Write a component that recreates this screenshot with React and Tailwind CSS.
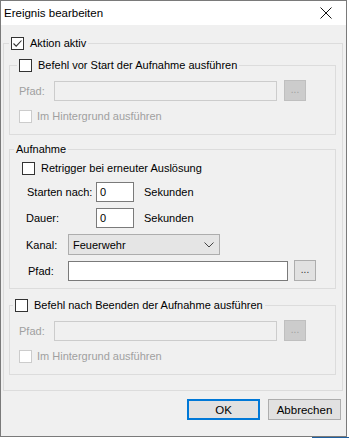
import React from 'react';

const font = { fontFamily: '"Liberation Sans", Arial, sans-serif' };

const Check = ({ checked, disabled }) => (
  <span
    className={`inline-flex items-center justify-center w-[13px] h-[13px] shrink-0 border bg-white ${
      disabled ? 'border-[#cccccc]' : 'border-[#333333]'
    }`}
  >
    {checked && (
      <svg width="11" height="11" viewBox="0 0 11 11">
        <path d="M1.5 5.5 L4.2 8.2 L9.5 2.5" fill="none" stroke="#333333" strokeWidth="1.1" />
      </svg>
    )}
  </span>
);

const DotsButton = ({ disabled }) => (
  <div
    className={`w-[22px] h-[21px] border flex items-center justify-center text-[10px] leading-none pb-[2px] ${
      disabled ? 'bg-[#cccccc] border-[#bfbfbf] text-[#a0a0a0]' : 'bg-[#e1e1e1] border-[#adadad] text-[#333]'
    }`}
  >
    ...
  </div>
);

const DisabledCommand = () => (
  <div className="pl-[9px] pr-[6px]">
    <div className="flex items-center mt-[8px]">
      <span className="w-[35px] text-[#a0a0a0]">Pfad:</span>
      <div className="w-[223px] h-[20px] border border-[#cccccc] bg-[#f0f0f0]" />
      <div className="ml-[7px]">
        <DotsButton disabled />
      </div>
    </div>
    <div className="flex items-center mt-[8px] mb-[11px]">
      <Check disabled />
      <span className="ml-[5px] text-[#a0a0a0]">Im Hintergrund ausführen</span>
    </div>
  </div>
);

export default function App() {
  return (
    <div className="w-[349px] h-[438px] bg-white relative text-[11px] leading-[14px] text-black" style={font}>
      <div className="w-[347px] h-[437px] border border-[#7a7a7a] bg-[#f0f0f0] flex flex-col">
        {/* Titelleiste */}
        <div className="h-[24px] bg-white flex items-center justify-between pl-[3px] pr-[14px] shrink-0">
          <span className="text-[11.5px]">Ereignis bearbeiten</span>
          <svg width="12" height="12" viewBox="0 0 12 12">
            <path d="M0.5 0.5 L11.5 11.5 M11.5 0.5 L0.5 11.5" stroke="#111" strokeWidth="1" />
          </svg>
        </div>

        <div className="pl-[2px] pr-[3px]">
          {/* Aktion aktiv */}
          <fieldset className="mt-[11px] border border-[#dcdcdc] pl-[5px] pr-[6px] pb-[15px] w-[340px]">
            <legend className="flex items-center px-[2px] h-[14px]">
              <Check checked />
              <span className="ml-[6px]">Aktion aktiv</span>
            </legend>

            <fieldset className="mt-[8px] border border-[#dcdcdc] p-0">
              <legend className="flex items-center ml-[7px] px-[2px] h-[14px]">
                <Check />
                <span className="ml-[6px]">Befehl vor Start der Aufnahme ausführen</span>
              </legend>
              <DisabledCommand />
            </fieldset>

            <fieldset className="mt-[7px] border border-[#dcdcdc] p-0">
              <legend className="ml-[4px] px-[2px] h-[14px]">Aufnahme</legend>
              <div className="pl-[12px] pr-[6px] pb-[7px]">
                <div className="flex items-center mt-[5px]">
                  <Check />
                  <span className="ml-[6px]">Retrigger bei erneuter Auslösung</span>
                </div>
                <div className="flex items-center mt-[7px] pl-[5px]">
                  <span className="w-[69px]">Starten nach:</span>
                  <div className="w-[38px] h-[20px] border border-[#7a7a7a] bg-white pl-[3px] flex items-center">0</div>
                  <span className="ml-[10px]">Sekunden</span>
                </div>
                <div className="flex items-center mt-[6px] pl-[4px]">
                  <span className="w-[70px]">Dauer:</span>
                  <div className="w-[38px] h-[20px] border border-[#7a7a7a] bg-white pl-[3px] flex items-center">0</div>
                  <span className="ml-[10px]">Sekunden</span>
                </div>
                <div className="flex items-center mt-[6px] pl-[4px]">
                  <span className="w-[42px]">Kanal:</span>
                  <div className="w-[152px] h-[21px] border border-[#adadad] bg-[#e5e5e5] pl-[4px] pr-[5px] flex items-center justify-between">
                    <span>Feuerwehr</span>
                    <svg width="10" height="6" viewBox="0 0 10 6">
                      <path d="M0.5 0.5 L5 5 L9.5 0.5" fill="none" stroke="#444" strokeWidth="1" />
                    </svg>
                  </div>
                </div>
                <div className="flex items-center mt-[5px] pl-[6px]">
                  <span className="w-[40px]">Pfad:</span>
                  <div className="w-[220px] h-[20px] border border-[#7a7a7a] bg-white" />
                  <div className="ml-[6px]">
                    <DotsButton />
                  </div>
                </div>
              </div>
            </fieldset>

            <fieldset className="mt-[9px] border border-[#dcdcdc] p-0">
              <legend className="flex items-center ml-[3px] px-[2px] h-[14px]">
                <Check />
                <span className="ml-[6px]">Befehl nach Beenden der Aufnahme ausführen</span>
              </legend>
              <DisabledCommand />
            </fieldset>
          </fieldset>

          {/* Buttons */}
          <div className="flex justify-end gap-[8px] mt-[8px] pr-[2px]">
            <button className="w-[73px] h-[21px] border-2 border-[#0078d7] bg-[#e1e1e1] text-[11.5px]">OK</button>
            <button className="w-[73px] h-[21px] border border-[#adadad] bg-[#e1e1e1] text-[11.5px]">Abbrechen</button>
          </div>
        </div>
      </div>
      <div className="absolute right-0 bottom-0 w-[37px] h-[1px] bg-[#1f5f9f]" />
    </div>
  );
}
